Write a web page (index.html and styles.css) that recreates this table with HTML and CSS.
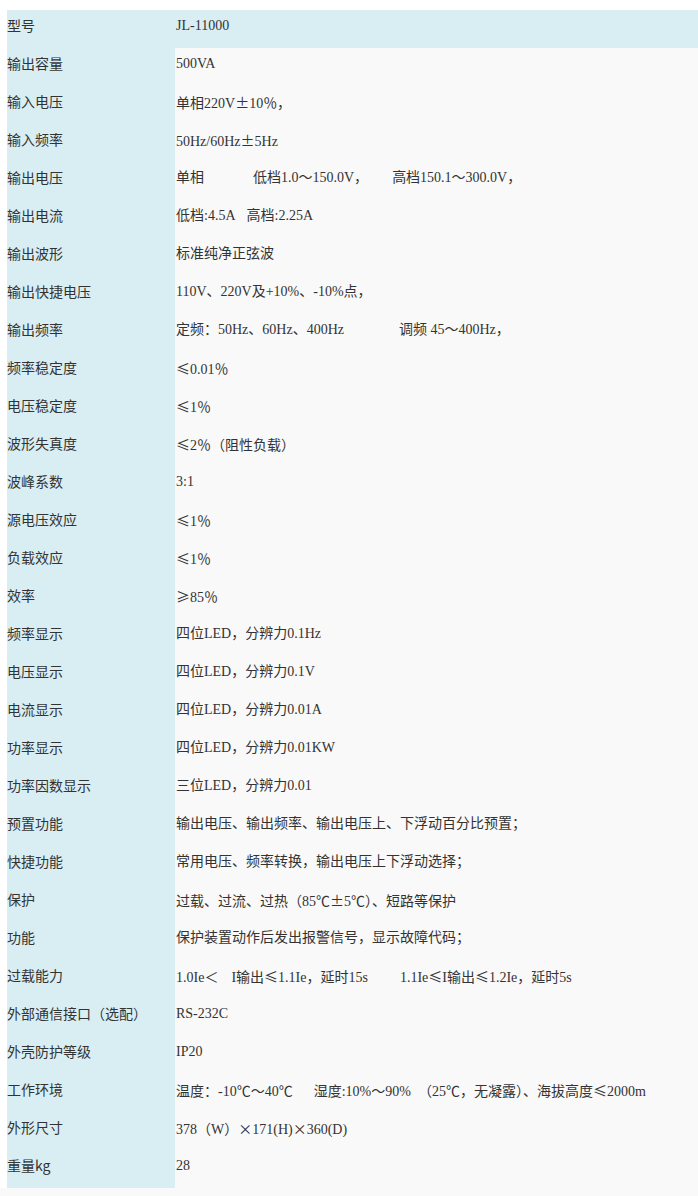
FILE: index.html
```html
<!DOCTYPE html>
<html lang="zh">
<head>
<meta charset="utf-8">
<title>JL-11000 参数</title>
<link rel="stylesheet" href="styles.css">
</head>
<body>
<div class="wrap">
<table class="spec">
<tbody>
<tr class="head"><td class="k">型号</td><td class="v">JL-11000</td></tr>
<tr><td class="k">输出容量</td><td class="v">500VA</td></tr>
<tr><td class="k">输入电压</td><td class="v">单相220V<span class="c">±</span>10％，</td></tr>
<tr><td class="k">输入频率</td><td class="v">50Hz/60Hz<span class="c">±</span>5Hz</td></tr>
<tr><td class="k">输出电压</td><td class="v">单相<span class="g49"></span>低档1.0～150.0V，<span class="g5a"></span>高档150.1～300.0V，</td></tr>
<tr><td class="k">输出电流</td><td class="v">低档:4.5A<span class="g6a"></span>高档:2.25A</td></tr>
<tr><td class="k">输出波形</td><td class="v">标准纯净正弦波</td></tr>
<tr><td class="k">输出快捷电压</td><td class="v">110V、220V及+10%、-10%点，</td></tr>
<tr><td class="k">输出频率</td><td class="v">定频：50Hz、60Hz、400Hz<span class="g9a"></span>调频 45～400Hz，</td></tr>
<tr><td class="k">频率稳定度</td><td class="v"><span class="c">≤</span>0.01％</td></tr>
<tr><td class="k">电压稳定度</td><td class="v"><span class="c">≤</span>1％</td></tr>
<tr><td class="k">波形失真度</td><td class="v"><span class="c">≤</span>2％（阻性负载）</td></tr>
<tr><td class="k">波峰系数</td><td class="v">3:1</td></tr>
<tr><td class="k">源电压效应</td><td class="v"><span class="c">≤</span>1％</td></tr>
<tr><td class="k">负载效应</td><td class="v"><span class="c">≤</span>1％</td></tr>
<tr><td class="k">效率</td><td class="v"><span class="c">≥</span>85％</td></tr>
<tr><td class="k">频率显示</td><td class="v">四位LED，分辨力0.1Hz</td></tr>
<tr><td class="k">电压显示</td><td class="v">四位LED，分辨力0.1V</td></tr>
<tr><td class="k">电流显示</td><td class="v">四位LED，分辨力0.01A</td></tr>
<tr><td class="k">功率显示</td><td class="v">四位LED，分辨力0.01KW</td></tr>
<tr><td class="k">功率因数显示</td><td class="v">三位LED，分辨力0.01</td></tr>
<tr><td class="k">预置功能</td><td class="v">输出电压、输出频率、输出电压上、下浮动百分比预置；</td></tr>
<tr><td class="k">快捷功能</td><td class="v">常用电压、频率转换，输出电压上下浮动选择；</td></tr>
<tr><td class="k">保护</td><td class="v">过载、过流、过热（85℃<span class="c">±</span>5℃）、短路等保护</td></tr>
<tr><td class="k">功能</td><td class="v">保护装置动作后发出报警信号，显示故障代码；</td></tr>
<tr><td class="k">过载能力</td><td class="v">1.0Ie＜<span class="g26a"></span>I输出<span class="c">≤</span>1.1Ie，延时15s<span class="g26"></span>1.1Ie<span class="c">≤</span>I输出<span class="c">≤</span>1.2Ie，延时5s</td></tr>
<tr><td class="k">外部通信接口（选配）</td><td class="v">RS-232C</td></tr>
<tr><td class="k">外壳防护等级</td><td class="v">IP20</td></tr>
<tr><td class="k">工作环境</td><td class="v">温度：-10℃～40℃<span class="g29a"></span>湿度:10%～90%<span class="g4"></span>（25℃，无凝露）、海拔高度<span class="c">≤</span>2000m</td></tr>
<tr><td class="k">外形尺寸</td><td class="v">378（W）<span class="c">×</span>171(H)<span class="c">×</span>360(D)</td></tr>
<tr><td class="k">重量kg</td><td class="v">28</td></tr>
</tbody>
</table>
</div>
</body>
</html>
```

FILE: styles.css
```css
html, body {
  margin: 0;
  padding: 0;
}
body {
  background: #f9f9f9;
  font-family: "Liberation Serif", "Noto Sans CJK SC", serif;
  font-size: 14px;
  color: #333333;
}
.wrap {
  background: #ffffff;
  padding: 10px 0 0 7px;
}
.spec {
  border-collapse: collapse;
  border-spacing: 0;
  width: 720px;
  table-layout: fixed;
  background: #f9f9f9;
}
.spec tr {
  height: 38px;
}
.spec td {
  vertical-align: top;
  padding: 6px 0 0 0;
  line-height: 20px;
  white-space: nowrap;
  box-sizing: border-box;
  height: 38px;
}
.spec td.k {
  width: 168px;
  padding-top: 5px;
  background: #d9eef3;
  font-family: "Noto Sans CJK SC", "Liberation Serif", sans-serif;
  color: #333333;
}
.spec td.v {
  padding-left: 1px;
  background: #f9f9f9;
}
.spec tr.head td.v {
  background: #d9eef3;
}
.c {
  font-family: "Noto Sans CJK SC", sans-serif;
}
.g49, .g5a, .g6a, .g9a, .g4, .g26, .g26a, .g29a {
  display: inline-block;
}
.g49 { width: 49px; }
.g5a { width: 24px; }
.g6a { width: 11px; }
.g9a { width: 55px; }
.g4 { width: 7px; }
.g26a { width: 13px; }
.g26 { width: 32px; }
.g29a { width: 21px; }
```
